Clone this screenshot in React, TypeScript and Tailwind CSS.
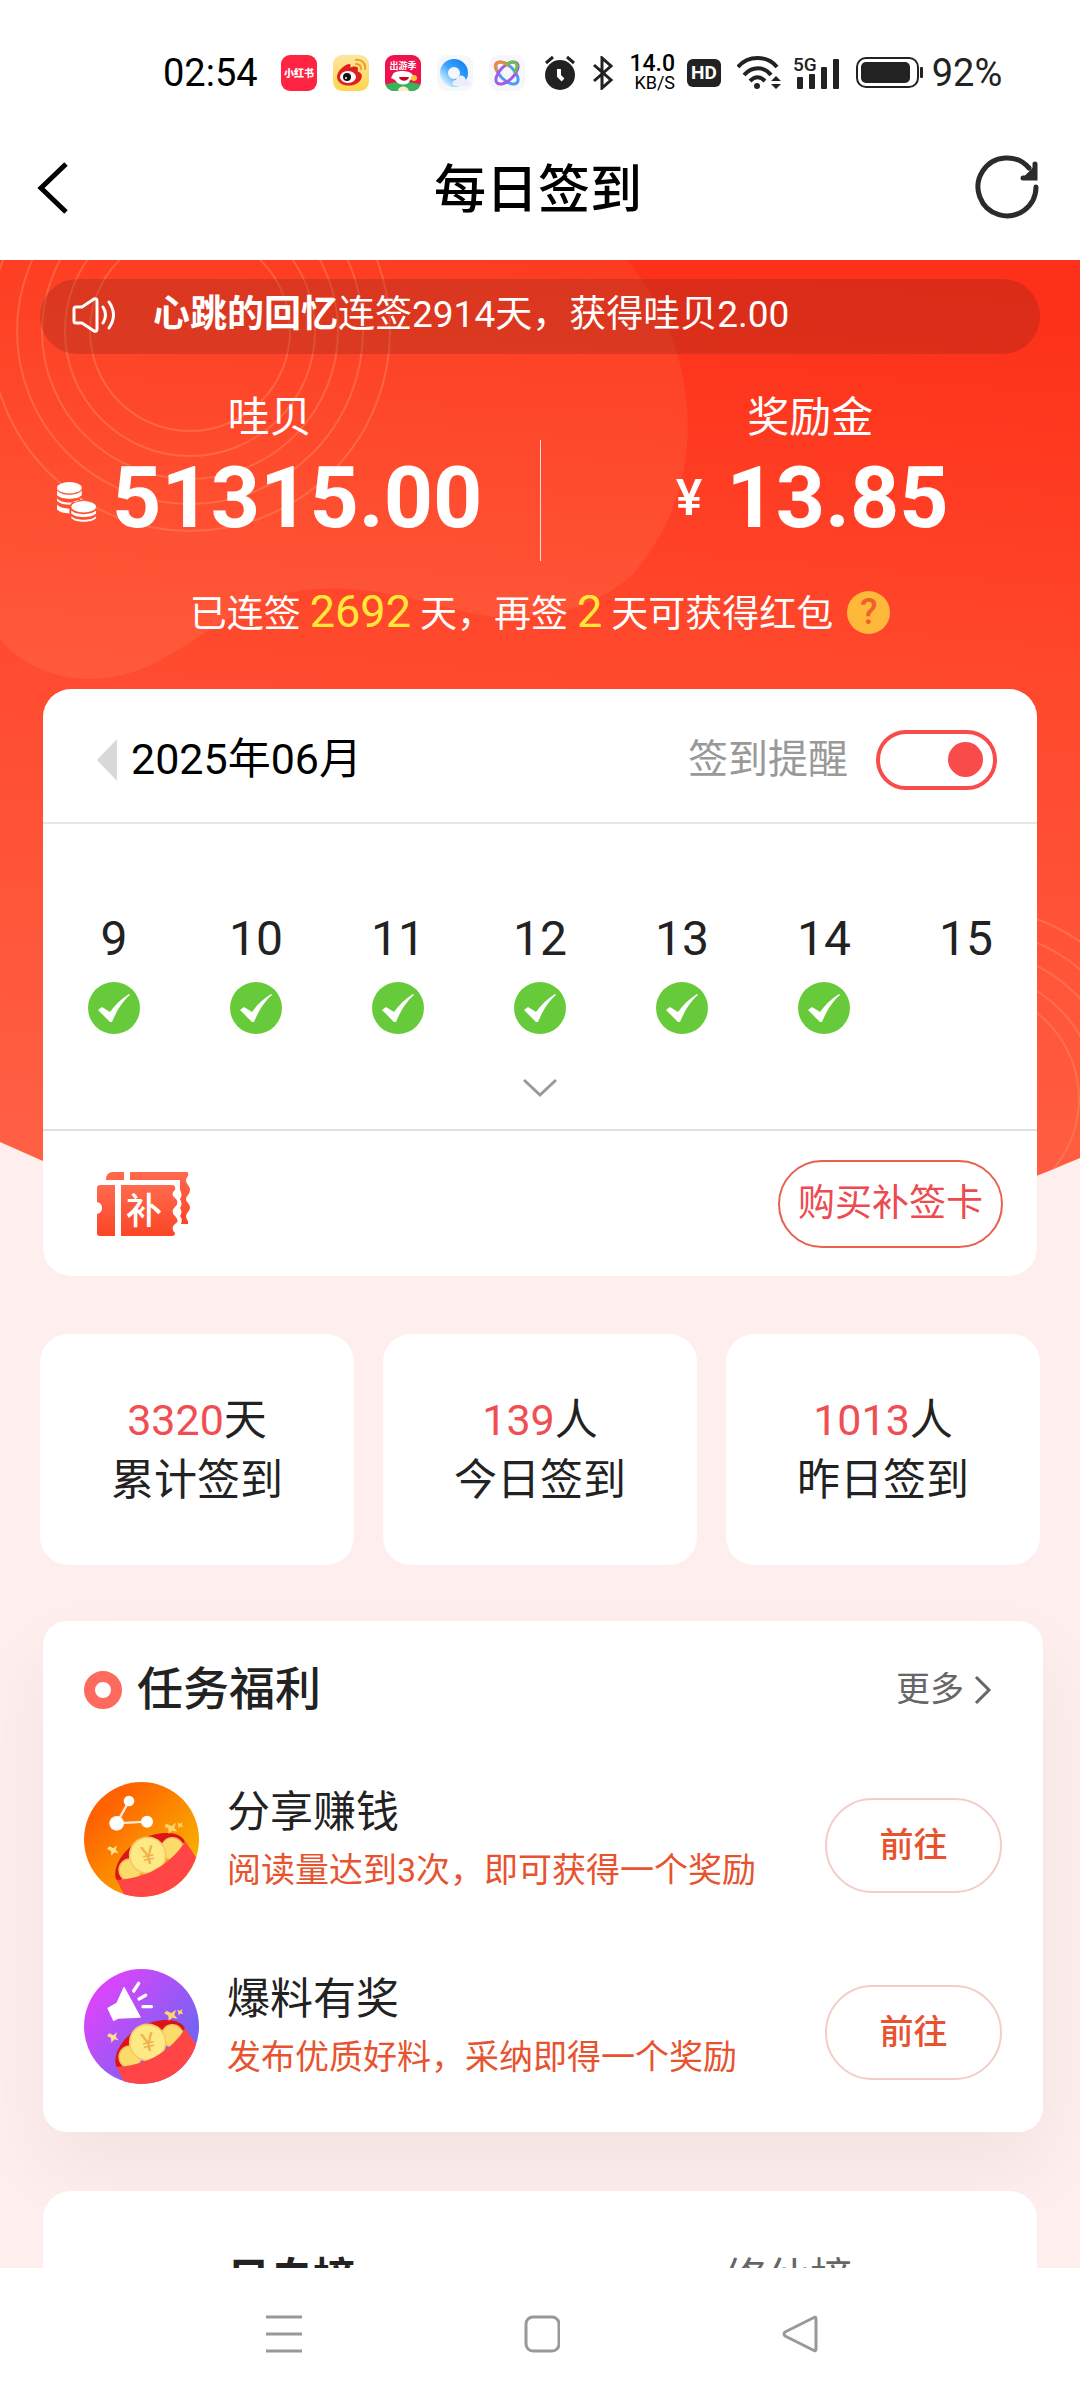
import React, { useState } from 'react'

const days = [
  { day: 9, signed: true },
  { day: 10, signed: true },
  { day: 11, signed: true },
  { day: 12, signed: true },
  { day: 13, signed: true },
  { day: 14, signed: true },
  { day: 15, signed: false },
]

const stats = [
  { value: '3320', unit: '天', label: '累计签到' },
  { value: '139', unit: '人', label: '今日签到' },
  { value: '1013', unit: '人', label: '昨日签到' },
]

const StatusBar = () => (
  <div className="flex h-[117px] shrink-0 items-center pt-[29px] pl-[163px] text-[#222]">
    <span className="w-[118px] text-[38px] text-black">02:54</span>
    <div className="flex items-center gap-4">
      <svg width="36" height="36" viewBox="0 0 36 36">
        <rect width="36" height="36" rx="9" fill="#ff2442" />
        <text x="18" y="22" fontSize="10" fontWeight="900" fill="#fff" textAnchor="middle">小红书</text>
      </svg>
      <svg width="36" height="36" viewBox="0 0 36 36">
        <defs>
          <linearGradient id="weibo" x2="0" y2="1">
            <stop stopColor="#fbe6a0" />
            <stop offset="1" stopColor="#ffd54a" />
          </linearGradient>
        </defs>
        <rect width="36" height="36" rx="9" fill="url(#weibo)" />
        <path d="M4 22c0-6 7-12 12-13 2 0 2 2 1 4 3-2 8-2 8 1 0 2-1 2 1 3 5 2 3 9-3 12-9 4-19 0-19-7z" fill="#e02020" />
        <ellipse cx="15" cy="22" rx="8" ry="6" fill="#fff" />
        <circle cx="14" cy="22" r="4" fill="#111" />
        <circle cx="13" cy="23" r="1" fill="#fff" />
        <path d="M23 5c6-1 10 4 9 9M23 9c3 0 5 2 5 5" stroke="#f39a2a" strokeWidth="2" fill="none" strokeLinecap="round" />
      </svg>
      <svg width="36" height="36" viewBox="0 0 36 36">
        <defs>
          <clipPath id="jdClip"><rect width="36" height="36" rx="9" /></clipPath>
        </defs>
        <g clipPath="url(#jdClip)">
          <rect width="36" height="36" fill="#f0124e" />
          <path d="M0 30c8-4 28-4 36 0v6H0z" fill="#35b45a" />
          <path d="M8 19c2-4 16-4 19 0l3 4-5 2c-1 6-12 6-15 0l-4-2z" fill="#fff" />
          <path d="M14 22h10c-1 5-9 5-10 0z" fill="#d0021b" />
          <path d="M13 36c0-6 10-6 11 0z" fill="#ffe9c7" />
          <circle cx="29" cy="23" r="3" fill="#ffc531" />
          <text x="18" y="14" fontSize="9" fontWeight="700" fill="#fff" textAnchor="middle">出游季</text>
        </g>
      </svg>
      <svg width="36" height="36" viewBox="0 0 36 36">
        <defs>
          <linearGradient id="cloud" x1="1" x2="0" y2="1">
            <stop stopColor="#1683f5" />
            <stop offset="0.5" stopColor="#3aa5ff" />
            <stop offset="1" stopColor="#d6efff" />
          </linearGradient>
        </defs>
        <rect width="36" height="36" rx="9" fill="#f5f7fa" />
        <circle cx="17" cy="18" r="10" fill="none" stroke="url(#cloud)" strokeWidth="8" />
        <path d="M18 31c-4-1-3-6 1-6 1-6 9-6 10 0 5 0 5 6 1 6z" fill="#e9eef8" />
      </svg>
      <svg width="36" height="36" viewBox="0 0 36 36" fill="none" strokeWidth="3">
        <rect width="36" height="36" rx="9" fill="#f7f6fb" />
        <ellipse cx="18" cy="18" rx="14" ry="7" transform="rotate(45 18 18)" stroke="#4a9cf5" />
        <ellipse cx="18" cy="18" rx="14" ry="7" transform="rotate(-45 18 18)" stroke="#a25bea" />
        <path d="M8 16c-3-5-2-9 3-9 3 0 6 2 9 4" stroke="#f58a3c" />
        <path d="M17 10c5-4 11-4 11 1 0 2-1 4-3 7" stroke="#6cc04a" />
      </svg>
      <svg className="ml-[3px]" width="32" height="36" viewBox="0 0 32 36" fill="none" strokeWidth="3">
        <circle cx="16" cy="20" r="15" fill="#222" />
        <path d="M2 8l7-6M30 8l-7-6" stroke="#222" />
        <path d="M15 14v7l4 4" stroke="#fff" strokeWidth="4" />
      </svg>
    </div>
    <svg className="ml-4" width="22" height="34" viewBox="0 0 22 34" fill="none" stroke="#222" strokeWidth="3">
      <path d="M2 9l17 15-9 8V2l9 8L2 25" />
    </svg>
    <div className="ml-3 flex w-[49px] flex-col items-end text-black">
      <span className="text-[23px] leading-[20px] font-medium">14.0</span>
      <span className="text-[18px] leading-[18px]">KB/S</span>
    </div>
    <span className="ml-3 rounded-md bg-[#222] px-1 text-[19px] leading-[28px] font-bold text-white">HD</span>
    <svg className="ml-4" width="44" height="34" viewBox="0 0 44 34" fill="none" stroke="#222" strokeWidth="4">
      <path d="M1 11C11-1 30-1 40 11M7 19c8-9 20-9 27 0M13 25c5-5 10-5 15 0" />
      <circle cx="20" cy="30" r="3" fill="#222" stroke="none" />
      <path d="M34 25l5-5 5 5zM34 28h10l-5 5z" fill="#222" stroke="none" />
    </svg>
    <svg className="ml-3 overflow-visible" width="48" height="34" viewBox="0 0 48 34" fill="#222">
      <text x="0" y="15" fontSize="19" fontWeight="500">5G</text>
      <rect x="4" y="21" width="6" height="12" rx="1" />
      <rect x="16" y="18" width="6" height="15" rx="1" />
      <rect x="28" y="11" width="6" height="22" rx="1" />
      <rect x="40" y="3" width="6" height="30" rx="1" />
    </svg>
    <svg className="ml-[15px]" width="68" height="32" viewBox="0 0 68 32">
      <rect x="1" y="1" width="61" height="29" rx="9" fill="none" stroke="#222" strokeWidth="2" />
      <rect x="5" y="5" width="49" height="21" rx="5" fill="#222" />
      <rect x="64" y="10" width="3" height="11" rx="1" fill="#222" />
    </svg>
    <span className="ml-2 text-[38px]">92%</span>
  </div>
)

const TitleBar = () => (
  <header className="grid h-[143px] shrink-0 grid-cols-3 items-center pr-[41px] pl-[37px]">
    <button aria-label="返回" className="justify-self-start">
      <svg width="32" height="54" viewBox="0 0 32 54" fill="none" stroke="#000" strokeWidth="5">
        <path d="M29 2L4 26l25 24" />
      </svg>
    </button>
    <h1 className="pt-1 text-center text-[52px] leading-[64px] font-medium text-black">每日签到</h1>
    <button aria-label="刷新" className="justify-self-end">
      <svg className="overflow-visible" width="64" height="64" viewBox="0 0 64 64" fill="none" stroke="#2b2b2b" strokeWidth="5" strokeLinecap="round">
        <path d="M61 30A29 29 0 1 1 54 11" />
        <path d="M60 7v14H48" />
        <path d="M60 10v10H50z" fill="#2b2b2b" strokeWidth="2" />
      </svg>
    </button>
  </header>
)

// Decorative red backdrop behind the balances and the calendar
const Backdrop = () => (
  <svg className="absolute inset-x-0 top-0 h-[950px] w-full" viewBox="0 259 1080 950" preserveAspectRatio="none" fill="none">
    <defs>
      <linearGradient id="hero" x1="0.55" x2="0.45" y2="1">
        <stop stopColor="#fd3019" />
        <stop offset="0.4" stopColor="#ff482c" />
        <stop offset="1" stopColor="#ff6145" />
      </linearGradient>
      <linearGradient id="blob" x2="0" y2="1">
        <stop stopColor="#ff6a40" stopOpacity="0.2" />
        <stop offset="1" stopColor="#ff7a55" stopOpacity="0.3" />
      </linearGradient>
      <clipPath id="heroClip">
        <path d="M0 259h1080v898Q540 1390 0 1141z" />
      </clipPath>
    </defs>
    <g clipPath="url(#heroClip)">
      <rect y="259" width="1080" height="950" fill="url(#hero)" />
      <path
        d="M0 259h627c75 90 85 225 5 315-50 45-120 50-175 35-50-14-110-28-165-18-85 20-122 87-202 87-35 0-70-15-90-40z"
        fill="url(#blob)"
      />
      <g stroke="#ff9468" strokeOpacity="0.4" strokeWidth="2">
        <circle cx="190" cy="330" r="100" />
        <circle cx="190" cy="330" r="125" />
        <circle cx="190" cy="330" r="148" />
        <circle cx="190" cy="330" r="173" />
        <circle cx="190" cy="330" r="200" />
        <circle cx="970" cy="1098" r="109" />
        <circle cx="970" cy="1098" r="127" />
        <circle cx="970" cy="1098" r="149" />
        <circle cx="970" cy="1098" r="170" />
        <circle cx="970" cy="1098" r="192" />
      </g>
    </g>
  </svg>
)

const Balances = () => (
  <section className="mt-8 flex text-center text-white">
    <div className="flex-1">
      <h2 className="text-[42px] leading-[64px]">哇贝</h2>
      <div className="flex items-center justify-center gap-[15px]">
        <svg className="mt-2" width="40" height="40" viewBox="0 0 42 42" fill="#fff">
          <ellipse cx="13" cy="6" rx="13" ry="6" />
          <path d="M0 9c5 6 21 6 26 0v5c-5 5-21 5-26 0zM0 17c5 6 21 6 26 0v2c-5 0-11 2-12 5-6 0-11-1-14-4zM0 24c3 3 8 4 13 4v5c-6 0-10-1-13-4z" />
          <ellipse cx="28" cy="26" rx="13" ry="6" />
          <path d="M15 30c5 5 21 5 26 0v3c-5 5-21 5-26 0zM15 36c5 5 21 5 26 0v2c-5 5-21 5-26 0z" />
        </svg>
        <span className="text-[86px] leading-[96px] font-bold">51315.00</span>
      </div>
    </div>
    <div className="mt-[54px] h-[121px] w-px bg-white/80" />
    <div className="flex-1">
      <h2 className="text-[42px] leading-[64px]">奖励金</h2>
      <div className="flex items-center justify-center gap-6 pl-1">
        <span className="text-[50px] font-medium">¥</span>
        <span className="text-[86px] leading-[96px] font-bold">13.85</span>
      </div>
    </div>
  </section>
)

const CalendarCard = () => {
  const [remind, setRemind] = useState(true)

  return (
    <section className="mx-[43px] mt-[47px] rounded-[28px] bg-white">
      <div className="flex h-[135px] items-center border-b-2 border-[#e6e6e6] pt-2 pr-[40px] pl-[54px]">
        <button aria-label="上个月">
          <svg width="20" height="42" viewBox="0 0 20 42" fill="#d8d8d8">
            <path d="M20 0v42L0 21z" />
          </svg>
        </button>
        <span className="ml-[14px] text-[43px] text-black">2025年06月</span>
        <label htmlFor="remind" className="mr-[28px] ml-auto text-[40px] text-[#999]">
          签到提醒
        </label>
        <input
          id="remind"
          type="checkbox"
          role="switch"
          checked={remind}
          onChange={(e) => setRemind(e.target.checked)}
          className="flex h-[60px] w-[121px] appearance-none items-center rounded-full border-4 border-[#fa4b4b] px-[10px] before:h-[35px] before:w-[35px] before:rounded-full before:bg-[#fa4b4b] checked:justify-end"
        />
      </div>
      <ul className="grid grid-cols-7 pt-[87px]">
        {days.map(({ day, signed }) => (
          <li key={day} className="flex flex-col items-center gap-[15px]">
            <span className="text-[48px] leading-[56px] text-[#222]">{day}</span>
            {signed && (
              <svg width="52" height="52" viewBox="0 0 52 52">
                <circle cx="26" cy="26" r="26" fill="#67ca3b" />
                <path d="M10 28l4-3 8 5c5-7 11-13 19-18l1 1c-8 7-13 15-18 27h-2z" fill="#fff" />
              </svg>
            )}
          </li>
        ))}
      </ul>
      <button aria-label="展开日历" className="flex h-[97px] w-full items-center justify-center border-b-2 border-[#e0e0e0]">
        <svg className="mt-3" width="34" height="20" viewBox="0 0 34 20" fill="none" stroke="#999" strokeWidth="3">
          <path d="M1 2l16 15L33 2" />
        </svg>
      </button>
      <div className="flex h-[145px] items-center justify-between pr-[34px] pl-[54px]">
        <svg width="94" height="66" viewBox="0 0 94 66">
          <defs>
            <linearGradient id="ticket" x2="0" y2="1">
              <stop stopColor="#ff6a4e" />
              <stop offset="1" stopColor="#fb4526" />
            </linearGradient>
          </defs>
          <path d="M9 9q0-8 7-8h11v8zM33 1h57q2 0 1 4-4 4 0 9t0 10q-4 4 0 8t0 9q-4 4 0 9v3h-7q2-5-1-8 3-4 0-8 3-4 0-9 3-4 0-9V9H33z" fill="url(#ticket)" />
          <path d="M0 17q0-3 3-3h15v51H3q-3 0-3-3V43q5-1 5-6t-5-6zM24 14h52q3 1 2 5-5 4 0 8t0 9q-5 4 0 9t0 8q-5 4 0 9 0 3-3 3H24z" fill="url(#ticket)" />
          <text x="47" y="53" fontSize="36" fontWeight="500" fill="#fff" textAnchor="middle">补</text>
        </svg>
        <button className="h-[88px] w-[225px] rounded-full border-2 border-[#e8604f] text-[37px] text-[#ee4a50]">
          购买补签卡
        </button>
      </div>
    </section>
  )
}

// Open red envelope with coins, shared by both task icons
const Envelope = () => (
  <>
    <path d="M96 292c-14-50 45-118 112-134 50-12 88-2 95 22L106 296z" fill="#dc1418" />
    <circle cx="138" cy="264" r="33" fill="#fbdc6a" stroke="#f6bd5c" strokeWidth="4" />
    <circle cx="265" cy="200" r="33" fill="#fbdc6a" stroke="#f6bd5c" strokeWidth="4" />
    <circle cx="191" cy="220" r="54" fill="#fdea84" stroke="#f8c765" strokeWidth="5" />
    <text x="193" y="246" fontSize="76" fill="#f3b04e" textAnchor="middle" transform="rotate(-12 193 222)">¥</text>
    <path d="M98 294c90-5 160-45 206-116l60 90v90H130z" fill="#ff4546" />
    <path d="M76 193l12 6 11-9-4 13 9 11-13-3-9 10-1-14-12-6z" fill="#ffe28a" />
    <path d="M247 125l15 7 14-10-5 16 10 11-16-3-11 9-1-15-12-7zM280 122l8 3 8-5-3 9 5 6-9-1-6 5v-8z" fill="#ffd56a" />
  </>
)

const ShareIcon = () => (
  <svg className="rounded-full" width="115" height="115" viewBox="0 0 345 345">
    <defs>
      <linearGradient id="share" x2="1" y2="1">
        <stop offset="0.2" stopColor="#ff6200" />
        <stop offset="0.85" stopColor="#f8b500" />
      </linearGradient>
    </defs>
    <rect width="345" height="345" fill="url(#share)" />
    <path d="M135 57l-37 67 91-5" fill="none" stroke="#fff" strokeOpacity="0.85" strokeWidth="7" />
    <g fill="#fff">
      <circle cx="135" cy="57" r="16" />
      <circle cx="98" cy="124" r="22" />
      <circle cx="189" cy="119" r="18" />
    </g>
    <Envelope />
  </svg>
)

const ReportIcon = () => (
  <svg className="rounded-full" width="115" height="115" viewBox="0 0 345 345">
    <defs>
      <linearGradient id="report" x2="1" y2="0.8">
        <stop offset="0.15" stopColor="#de44fa" />
        <stop offset="0.85" stopColor="#7663f3" />
      </linearGradient>
    </defs>
    <rect width="345" height="345" fill="url(#report)" />
    <path d="M120 56l48 88-65 3-14 7-17-36 27-15z" fill="#fff" stroke="#fff" strokeWidth="4" strokeLinejoin="round" />
    <path d="M149 66l15-23M165 90l20-11M177 113h25" stroke="#fff" strokeWidth="10" strokeLinecap="round" />
    <Envelope />
  </svg>
)

interface TaskProps {
  icon: React.ReactNode
  title: string
  desc: string
}

const Task: React.FC<TaskProps> = ({ icon, title, desc }) => (
  <li className="flex h-[115px] items-center">
    {icon}
    <div className="ml-[28px] flex-1">
      <h3 className="text-[43px] leading-[60px] text-[#222]">{title}</h3>
      <p className="text-[34px] leading-[56px] text-[#e8532f]">{desc}</p>
    </div>
    <button className="mt-3 h-[95px] w-[177px] rounded-full border-2 border-[#f3cdc8] text-[34px] font-medium text-[#e8532f]">
      前往
    </button>
  </li>
)

const NavBar = () => (
  <nav className="flex h-[132px] shrink-0 items-center justify-center gap-[222px] bg-white pl-1">
    <button aria-label="菜单">
      <svg width="36" height="38" viewBox="0 0 36 38" stroke="#999" strokeWidth="3">
        <path d="M0 2h36M0 19h36M0 36h36" />
      </svg>
    </button>
    <button aria-label="主页">
      <svg width="36" height="38" viewBox="0 0 36 38" fill="none" stroke="#999" strokeWidth="3">
        <rect x="2" y="2" width="33" height="34" rx="7" />
      </svg>
    </button>
    <button aria-label="后退">
      <svg width="36" height="38" viewBox="0 0 36 38" fill="none" stroke="#999" strokeWidth="3" strokeLinejoin="round">
        <path d="M34 4v30q0 3-3 1L3 21q-2-2 0-4L31 3q3-2 3 1z" />
      </svg>
    </button>
  </nav>
)

export default function App() {
  return (
    <div className="flex h-screen flex-col overflow-hidden bg-white font-['Roboto','Noto_Sans_CJK_SC',sans-serif]">
      <StatusBar />
      <TitleBar />
      <main className="relative min-h-0 flex-1 overflow-hidden bg-[#feeeee]">
        <Backdrop />
        <div className="relative">
          <div className="mx-[40px] mt-[19px] flex h-[75px] items-center rounded-full bg-[#8f2418]/30 pb-1 pl-[32px] text-[37px] text-white">
            <svg width="46" height="36" viewBox="0 0 46 36" fill="none" stroke="#fff" strokeWidth="3" strokeLinejoin="round" strokeLinecap="round">
              <path d="M2 12q0-2 2-2h6l12-8q3-1 3 2v28q0 3-3 2l-12-8H4q-2 0-2-2zM31 10q5 8 0 16M37 5q9 13 0 26" />
            </svg>
            <p className="ml-[35px]">
              <b>心跳的回忆</b>连签2914天，获得哇贝2.00
            </p>
          </div>
          <Balances />
          <div className="mt-[21px] flex h-[60px] items-center justify-center text-[37px] text-white">
            <p>
              已连签<span className="mx-[9px] text-[45px] leading-[60px] text-[#ffe838]">2692</span>天，再签
              <span className="mx-[9px] text-[45px] leading-[60px] text-[#ffe838]">2</span>天可获得红包
            </p>
            <button aria-label="规则说明" className="ml-[14px] h-[43px] w-[43px] rounded-full bg-[#ffb93a] text-[36px] leading-[43px] font-medium text-[#f0602c]">
              ?
            </button>
          </div>
          <CalendarCard />
          <section className="mx-[40px] mt-[58px] grid grid-cols-3 gap-[29px]">
            {stats.map(({ value, unit, label }) => (
              <div key={label} className="flex h-[231px] flex-col justify-center rounded-[28px] bg-white text-center text-[43px] leading-[60px] text-[#222]">
                <p>
                  <span className="text-[#f04e52]">{value}</span>
                  {unit}
                </p>
                <p>{label}</p>
              </div>
            ))}
          </section>
          <section className="mr-[37px] ml-[43px] mt-[56px] rounded-[24px] bg-white pr-[41px] pb-[48px] pl-[41px] shadow-[0_36px_80px_rgba(0,0,0,0.05)]">
            <div className="flex h-[137px] items-center">
              <span className="h-[38px] w-[38px] rounded-full border-[11px] border-[#ff6a5e]" />
              <h2 className="ml-[15px] text-[46px] font-medium text-[#222]">任务福利</h2>
              <a href="#tasks" className="mr-[10px] ml-auto flex items-center gap-[10px] text-[34px] text-[#666]">
                更多
                <svg width="18" height="30" viewBox="0 0 18 30" fill="none" stroke="#666" strokeWidth="3">
                  <path d="M2 2l13 13L2 28" />
                </svg>
              </a>
            </div>
            <ul id="tasks" className="mt-6 flex flex-col gap-[72px]">
              <Task icon={<ShareIcon />} title="分享赚钱" desc="阅读量达到3次，即可获得一个奖励" />
              <Task icon={<ReportIcon />} title="爆料有奖" desc="发布优质好料，采纳即得一个奖励" />
            </ul>
          </section>
          <section className="mx-[43px] mt-[59px] grid grid-cols-2 rounded-t-[28px] bg-white pt-[56px] pb-10 text-center text-[43px] leading-[64px]">
            <button className="font-bold text-[#222]">日自榜</button>
            <button className="text-[#666]">修仙榜</button>
          </section>
        </div>
      </main>
      <NavBar />
    </div>
  )
}
